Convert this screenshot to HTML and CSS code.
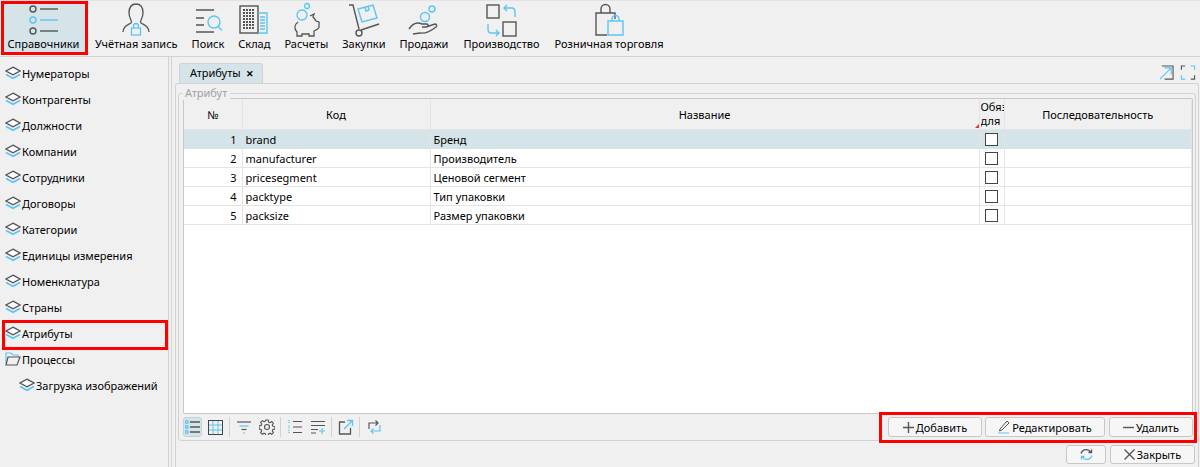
FILE: index.html
```html
<!DOCTYPE html>
<html lang="ru">
<head>
  <meta charset="UTF-8">
  <title>Атрибуты</title>
  <link rel="stylesheet" href="styles.css">
</head>
<body>
  <svg class="defs" width="0" height="0">
    <symbol id="layers" viewBox="0 0 16 14">
      <path d="M1 8.500l7 3.800 7-3.800" fill="none" stroke="#5cc5f2" stroke-width="1.800"/>
      <path d="M8 1.200L15 5 8 8.800 1 5z" fill="#fff" stroke="#555" stroke-width="1.400"/>
    </symbol>
  </svg>

  <div class="toolbar">
    <div class="tool tool-active">
      <svg width="32" height="36" viewBox="0 0 32 36" fill="none" stroke="#555" stroke-width="1.4"><circle cx="5" cy="7" r="3"/><path d="M12 7h18"/><circle cx="5" cy="18" r="3" stroke="#5cc5f2"/><path d="M12 18h18" stroke="#5cc5f2"/><circle cx="5" cy="29" r="3"/><path d="M12 29h18"/></svg>
      <span>Справочники</span>
    </div>
    <div class="tool">
      <svg width="28" height="36" viewBox="0 0 28 36" fill="none" stroke="#555" stroke-width="1.3"><path d="M1 30c0-6 5-7 8-9 2-2-2-4-2-10 0-6 3-9 7-9s7 3 7 9c0 6-4 8-2 10 3 2 8 3 8 9"/><rect x="9.500" y="26" width="9" height="7" stroke="#5cc5f2"/><path d="M11.500 26v-2a2.500 2.500 0 0 1 5 0v2" stroke="#5cc5f2"/></svg>
      <span>Учётная запись</span>
    </div>
    <div class="tool">
      <svg width="30" height="36" viewBox="0 0 30 36" fill="none" stroke="#555" stroke-width="1.4"><path d="M3 8h18M3 16h8M3 23h8M3 30h18"/><circle cx="21" cy="20" r="6" stroke="#5cc5f2"/><path d="M25 24.500l4 4" stroke="#5cc5f2"/></svg>
      <span>Поиск</span>
    </div>
    <div class="tool">
      <svg width="30" height="36" viewBox="0 0 30 36" fill="none" stroke="#555" stroke-width="1.4"><rect x="1" y="4" width="18" height="27"/><path d="M4 8h12M4 11h12M4 14h12M4 17h12M4 20h12M4 23h12M4 26h12" stroke-width="2" stroke-dasharray="2 1"/><path d="M19 11h9v20h-9" stroke="#5cc5f2"/><path d="M21 15h5M21 18h5M21 21h5M21 24h5M21 27h5" stroke="#5cc5f2"/></svg>
      <span>Склад</span>
    </div>
    <div class="tool">
      <svg width="32" height="36" viewBox="0 0 32 36" fill="none" stroke="#555" stroke-width="1.3"><circle cx="17" cy="4" r="2.500" stroke="#5cc5f2"/><circle cx="12" cy="13" r="5" stroke="#5cc5f2"/><path d="M8 20c-4 3-4 7-1 10v4h5v-2h7v2h5v-5c2-1 5-2 5-4v-5l-3-1c-1-2-2-3-3-4l1-3-4 2"/></svg>
      <span>Расчеты</span>
    </div>
    <div class="tool">
      <svg width="32" height="36" viewBox="0 0 32 36" fill="none" stroke="#555" stroke-width="1.4"><path d="M1 3h4l6 24M13 28l18-6"/><circle cx="11" cy="31" r="3"/><path d="M10 7l15-4 4 13-15 4z" stroke="#5cc5f2"/><path d="M17 5l1 4 3-1-1-4" stroke="#5cc5f2"/></svg>
      <span>Закупки</span>
    </div>
    <div class="tool">
      <svg width="32" height="36" viewBox="0 0 32 36" fill="none" stroke="#555" stroke-width="1.4"><circle cx="24" cy="7" r="3" stroke="#5cc5f2"/><circle cx="17" cy="15" r="4.500" stroke="#5cc5f2"/><path d="M1 27c4-6 9-7 13-5h5c2 1 1 3-1 3h-4M18 25l9-3c2 0 2 2 1 3-5 4-10 7-16 6l-7 1"/></svg>
      <span>Продажи</span>
    </div>
    <div class="tool tool-prod">
      <svg width="32" height="36" viewBox="0 0 32 36" fill="none" stroke="#555" stroke-width="1.4"><rect x="2" y="3" width="12" height="13"/><rect x="18" y="20" width="13" height="14"/><path d="M19 6h8c2 0 3 2 3 4v5M22 3l-3 3 3 3" stroke="#5cc5f2"/><path d="M14 31H6c-2 0-3-2-3-4v-5M11 34l3-3-3-3" stroke="#5cc5f2"/></svg>
      <span>Производство</span>
    </div>
    <div class="tool tool-wide">
      <svg width="32" height="36" viewBox="0 0 32 36" fill="none" stroke-width="1.4"><path d="M14 33H3V11h19v6M8 11V7a4.500 4.500 0 0 1 9 0v4" stroke="#555"/><path d="M15 19h15v14H15zM19 19v-2a3.500 3.500 0 0 1 7 0v2" stroke="#5cc5f2"/></svg>
      <span>Розничная торговля</span>
    </div>
  </div>

  <div class="main">
    <div class="sidebar">
      <div class="node"><svg width="16" height="14"><use href="#layers"/></svg>Нумераторы</div>
      <div class="node"><svg width="16" height="14"><use href="#layers"/></svg>Контрагенты</div>
      <div class="node"><svg width="16" height="14"><use href="#layers"/></svg>Должности</div>
      <div class="node"><svg width="16" height="14"><use href="#layers"/></svg>Компании</div>
      <div class="node"><svg width="16" height="14"><use href="#layers"/></svg>Сотрудники</div>
      <div class="node"><svg width="16" height="14"><use href="#layers"/></svg>Договоры</div>
      <div class="node"><svg width="16" height="14"><use href="#layers"/></svg>Категории</div>
      <div class="node"><svg width="16" height="14"><use href="#layers"/></svg>Единицы измерения</div>
      <div class="node"><svg width="16" height="14"><use href="#layers"/></svg>Номенклатура</div>
      <div class="node"><svg width="16" height="14"><use href="#layers"/></svg>Страны</div>
      <div class="node node-marked"><svg width="16" height="14"><use href="#layers"/></svg>Атрибуты</div>
      <div class="node"><svg width="16" height="14" viewBox="0 0 16 14" fill="none" stroke-width="1.200"><path d="M1 11V1h5l2 2h5v2" stroke="#5cc5f2"/><path d="M3 5h12l-3 8H1z" stroke="#555"/></svg>Процессы</div>
      <div class="node node-child"><svg width="16" height="14"><use href="#layers"/></svg>Загрузка изображений</div>
    </div>

    <div class="splitter"></div>

    <div class="content">
      <div class="tabbar">
        <div class="tab">Атрибуты <span class="tab-close">✕</span></div>
        <div class="tab-tools">
          <svg width="15" height="15" viewBox="0 0 16 16" fill="none"><path d="M3 1h12v14H6" stroke="#555" stroke-width="1.2"/><path d="M1 15L13 3M6 3h7v7" stroke="#5cc5f2" stroke-width="1.2"/></svg>
          <svg width="16" height="15" viewBox="0 0 16 16" fill="none" stroke="#5cc5f2" stroke-width="1.2"><path d="M1 5V1h4" stroke="#555"/><path d="M11 1h4v4"/><path d="M15 11v4h-4" stroke="#555"/><path d="M5 15H1v-4"/></svg>
        </div>
      </div>

      <div class="pane">
        <div class="group">
          <div class="group-title">Атрибут</div>
          <div class="grid">
            <table>
              <colgroup>
                <col class="col-num"><col class="col-code"><col class="col-name"><col class="col-req"><col>
              </colgroup>
              <thead>
                <tr>
                  <th>№</th>
                  <th>Код</th>
                  <th class="th-name">Название</th>
                  <th class="th-req"><div class="clip">Обяз<br>для</div></th>
                  <th>Последовательность</th>
                </tr>
              </thead>
              <tbody>
                <tr class="selected"><td class="num">1</td><td>brand</td><td>Бренд</td><td class="check"><i></i></td><td></td></tr>
                <tr><td class="num">2</td><td>manufacturer</td><td>Производитель</td><td class="check"><i></i></td><td></td></tr>
                <tr><td class="num">3</td><td>pricesegment</td><td>Ценовой сегмент</td><td class="check"><i></i></td><td></td></tr>
                <tr><td class="num">4</td><td>packtype</td><td>Тип упаковки</td><td class="check"><i></i></td><td></td></tr>
                <tr><td class="num">5</td><td>packsize</td><td>Размер упаковки</td><td class="check"><i></i></td><td></td></tr>
              </tbody>
            </table>
          </div>

          <div class="grid-bar">
            <div class="grid-tools">
              <span class="ico ico-on"><svg width="15" height="14" viewBox="0 0 15 14" fill="none" stroke="#555" stroke-width="1.300"><path d="M5 2h10M5 7h10M5 12h10"/><circle cx="1.800" cy="2" r="1.300" stroke="#5cc5f2"/><circle cx="1.800" cy="7" r="1.300" stroke="#5cc5f2"/><circle cx="1.800" cy="12" r="1.300" stroke="#5cc5f2"/></svg></span>
              <span class="ico"><svg width="15" height="15" viewBox="0 0 15 15" fill="none" stroke="#5cc5f2"><path d="M5 1v13M10 1v13M1 5h13M1 10h13"/><rect x=".5" y=".5" width="14" height="14" stroke="#444"/></svg></span>
              <span class="sep"></span>
              <span class="ico"><svg width="16" height="16" viewBox="0 0 16 16" fill="none" stroke-width="1.200"><path d="M1 3h14" stroke="#555"/><path d="M3.500 7h9" stroke="#5cc5f2"/><path d="M5.500 10.500h5" stroke="#555"/><path d="M7 14h2" stroke="#5cc5f2"/></svg></span>
              <span class="ico"><svg width="16" height="16" viewBox="0 0 16 16" fill="none" stroke="#555" stroke-width="1.100"><circle cx="8" cy="8" r="2.500"/><path d="M6.800 1h2.400l.4 2 1.400.6 1.700-1.100 1.700 1.700-1.100 1.700.6 1.400 2 .4v2.400l-2 .4-.6 1.400 1.100 1.700-1.700 1.700-1.700-1.100-1.400.6-.4 2H6.800l-.4-2-1.400-.6-1.700 1.100-1.700-1.700 1.100-1.700-.6-1.400-2-.4V6.800l2-.4.600-1.400-1.100-1.700 1.700-1.700 1.700 1.100 1.400-.6z"/></svg></span>
              <span class="sep"></span>
              <span class="ico"><svg width="16" height="16" viewBox="0 0 16 16" fill="none" stroke="#555" stroke-width="1.200"><path d="M6 2.500h9M6 8h9M6 13.500h9"/><path d="M2 1v4M2 6.500v3M2 11v4" stroke="#5cc5f2" stroke-width="1.500" stroke-dasharray="1 1"/></svg></span>
              <span class="ico"><svg width="16" height="16" viewBox="0 0 16 16" fill="none" stroke="#555" stroke-width="1.200"><path d="M1 2.500h14M1 6.500h14M1 10.500h7M1 14h5"/><path d="M12 9v6M9 12h6" stroke="#5cc5f2"/></svg></span>
              <span class="sep"></span>
              <span class="ico"><svg width="16" height="16" viewBox="0 0 16 16" fill="none" stroke-width="1.300"><path d="M7 3H1.500v12h11V9" stroke="#555"/><path d="M6 10l8-8M9 1.500h5.500V7" stroke="#5cc5f2"/></svg></span>
              <span class="sep"></span>
              <span class="ico"><svg width="16" height="16" viewBox="0 0 16 16" fill="none" stroke-width="1.200"><path d="M3 10V4h9M9.500 1.500L12 4 9.500 6.500" stroke="#555"/><path d="M14 6v6H5M7.500 9.500L5 12l2.500 2.500" stroke="#5cc5f2"/></svg></span>
            </div>
            <div class="actions">
              <button class="btn btn-add"><svg width="11" height="11" viewBox="0 0 11 11" stroke="#555" stroke-width="1.400"><path d="M5.500 0v11M0 5.500h11"/></svg>Добавить</button>
              <button class="btn btn-edit"><svg width="12" height="14" viewBox="0 0 12 14" fill="none" stroke="#555"><path d="M2 9l7-8 2 2-7 7-2.500 1z"/><path d="M0 13h11" stroke="#5cc5f2"/></svg>Редактировать</button>
              <button class="btn btn-del"><svg width="11" height="11" viewBox="0 0 11 11" stroke="#555" stroke-width="1.400"><path d="M0 5.500h11"/></svg>Удалить</button>
            </div>
          </div>
        </div>

        <div class="footer">
          <button class="btn btn-refresh"><svg width="13" height="13" viewBox="0 0 13 13" fill="none" stroke-width="1.300"><path d="M1 5.500C2 2 6 .5 9 2.500l2 2M11.500 1.500v3h-3" stroke="#555"/><path d="M12 7.500c-1 3.500-5 5-8 3l-2-2M1.500 11.500v-3h3" stroke="#5cc5f2"/></svg></button>
          <button class="btn btn-close"><svg width="11" height="11" viewBox="0 0 11 11" stroke="#555" stroke-width="1.400"><path d="M.5.500l10 10M10.500.500l-10 10"/></svg>Закрыть</button>
        </div>
      </div>
    </div>
  </div>
</body>
</html>
```

FILE: styles.css
```css
html, body {
  height: 100%;
}
body {
  margin: 0;
  background: #f0f0f0;
  font-family: "Noto Sans", sans-serif;
  font-size: 11px;
  color: #000;
  display: flex;
  flex-direction: column;
  overflow: hidden;
}
svg {
  display: block;
  flex: none;
}
.defs {
  position: absolute;
}

.toolbar {
  height: 55px;
  flex: none;
  display: flex;
  align-items: stretch;
  padding-left: 4px;
  border-top: 1px solid #e2e2e2;
  border-bottom: 1px solid #d2d2d2;
}
.tool {
  display: flex;
  flex-direction: column;
  align-items: center;
  padding: 1px 7px 0;
  white-space: nowrap;
}
.tool span {
  line-height: 16px;
}
.tool svg {
  margin-bottom: -2px;
}
.tool-active {
  box-sizing: border-box;
  width: 87px;
  margin: 0 0 1px -3px;
  padding: 1px 2px 0 0;
  background: #d4e4e9;
  outline: 3px solid #f00;
  outline-offset: -3px;
}
.tool-prod {
  margin-left: 1px;
}
.tool-wide {
  margin-left: 1px;
}

.main {
  flex: 1;
  display: flex;
  min-height: 0;
}
.sidebar {
  width: 167px;
  flex: none;
  padding: 3px 0 0 5px;
  box-sizing: border-box;
}
.node {
  height: 26px;
  display: flex;
  align-items: center;
  gap: 1px;
  white-space: nowrap;
}
.node-marked {
  position: relative;
}
.node-marked::after {
  content: "";
  position: absolute;
  left: -3px;
  right: -1px;
  top: 0;
  bottom: -4px;
  border: 3px solid #f00;
}
.node-child {
  padding-left: 14px;
}
.splitter {
  width: 4px;
  flex: none;
  margin-left: 1px;
  border-left: 1px solid #d2d2d2;
  border-right: 1px solid #d2d2d2;
  box-sizing: border-box;
}

.content {
  flex: 1;
  min-width: 0;
  display: flex;
  flex-direction: column;
  padding-top: 6px;
}
.tabbar {
  height: 20px;
  flex: none;
  display: flex;
  justify-content: space-between;
  padding-left: 7px;
}
.tab {
  width: 84px;
  height: 20px;
  box-sizing: border-box;
  background: #d4e4e9;
  border: 1px solid #d2d2d2;
  border-bottom: 0;
  border-radius: 3px 3px 0 0;
  padding-left: 10px;
  line-height: 18px;
  white-space: nowrap;
}
.tab-close {
  font-size: 9px;
  margin-left: 3px;
  font-weight: bold;
}
.tab-tools {
  display: flex;
  gap: 6px;
  padding: 2px 4px 0 0;
}

.pane {
  flex: 1;
  min-height: 0;
  margin: 0 1px 0 3px;
  border: 1px solid #d2d2d2;
  border-bottom: 0;
  border-radius: 3px 3px 0 0;
  padding-top: 9px;
}
.group {
  height: 348px;
  box-sizing: border-box;
  margin: 0 2px;
  border: 1px solid #d2d2d2;
  border-radius: 3px;
  padding: 4px 2px 0 4px;
  position: relative;
  display: flex;
  flex-direction: column;
}
.group-title {
  position: absolute;
  left: 4px;
  top: -8px;
  padding: 0 3px 0 2px;
  background: #f0f0f0;
  color: #a0a0a0;
  line-height: 14px;
}
.grid {
  height: 316px;
  flex: none;
  box-sizing: border-box;
  background: #fff;
  border: 1px solid #c8c8c8;
  border-radius: 2px;
  overflow: hidden;
}
table {
  width: 100%;
  table-layout: fixed;
  border-collapse: collapse;
}
.col-num { width: 58px; }
.col-code { width: 188px; }
.col-name { width: 549px; }
.col-req { width: 25px; }
th {
  height: 30px;
  padding: 0;
  font-weight: normal;
  background: #f0f0f0;
  border-right: 1px solid #e4e4e4;
  border-bottom: 1px solid #e4e4e4;
}
.th-req {
  text-align: left;
  padding-left: 1px;
  line-height: 14px;
  position: relative;
}
.th-req::before {
  content: "";
  position: absolute;
  left: -5px;
  bottom: 1px;
  border-left: 4px solid transparent;
  border-bottom: 4px solid #e8332a;
}
.clip {
  width: 23px;
  overflow: hidden;
  white-space: nowrap;
}
td {
  height: 18px;
  padding: 0 0 0 3px;
  border-right: 1px solid #e4e4e4;
  border-bottom: 1px solid #e4e4e4;
  white-space: nowrap;
  overflow: hidden;
}
td.num {
  text-align: right;
  padding-right: 5px;
}
td.check {
  padding: 0;
}
td.check i {
  display: block;
  width: 11px;
  height: 11px;
  margin: 0 auto;
  border: 1px solid #444;
  background: #fff;
}
.selected td {
  background: #d4e4e9;
  border-bottom-color: #d4e4e9;
}

.grid-bar {
  flex: 1;
  display: flex;
  justify-content: space-between;
  align-items: center;
}
.grid-tools {
  display: flex;
  align-items: center;
  gap: 4px;
}
.ico {
  width: 19px;
  height: 20px;
  display: flex;
  align-items: center;
  justify-content: center;
  border-radius: 3px;
  border: 1px solid transparent;
  box-sizing: border-box;
}
.ico-on {
  background: #d4e4e9;
  border-color: #c2d2d6;
}
.sep {
  width: 1px;
  height: 20px;
  background: #d2d2d2;
}
.actions {
  display: flex;
  gap: 3px;
  position: relative;
}
.actions::after {
  content: "";
  position: absolute;
  left: -9px;
  right: -4px;
  top: -5px;
  bottom: -6px;
  border: 3px solid #f00;
  pointer-events: none;
}
.btn {
  height: 20px;
  box-sizing: border-box;
  padding: 0;
  display: flex;
  align-items: center;
  justify-content: center;
  gap: 2px;
  background: #f6f6f6;
  border: 1px solid #c8c8c8;
  border-radius: 3px;
  font: inherit;
  color: #000;
}
.btn-add { width: 94px; }
.btn-edit { width: 120px; }
.btn-del { width: 84px; margin-left: 1px; }

.footer {
  display: flex;
  justify-content: flex-end;
  gap: 4px;
  padding: 4px 3px 0 0;
}
.footer .btn {
  height: 19px;
}
.btn-refresh { width: 40px; }
.btn-close { width: 85px; }
```
